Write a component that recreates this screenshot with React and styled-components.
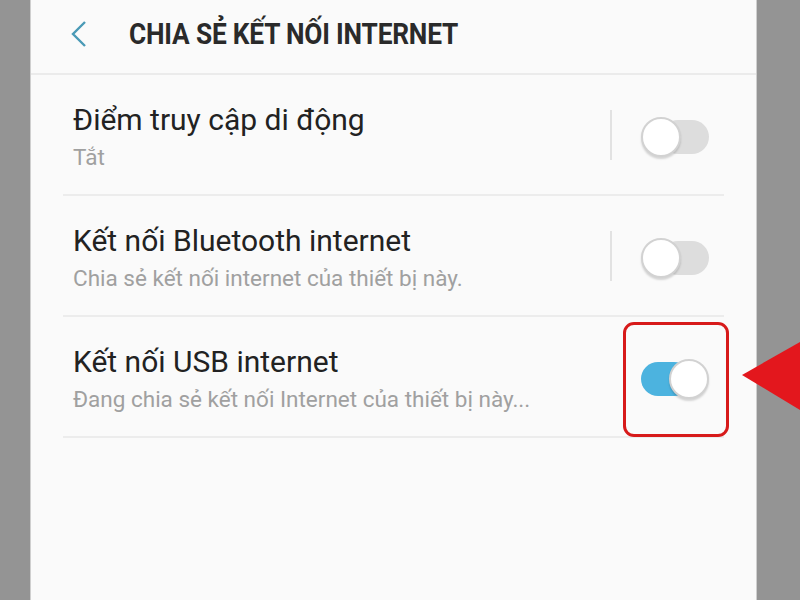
import React from "react";
import styled, { createGlobalStyle } from "styled-components";

const GlobalStyle = createGlobalStyle`
  html, body {
    margin: 0;
    padding: 0;
    background: #949494;
  }
  #root {
    height: 600px;
  }
`;

const Page = styled.div`
  display: flex;
  height: 600px;
  overflow: hidden;
  position: relative;
`;

const Side = styled.div`
  width: ${(p) => p.w}px;
  background: #949494;
  flex-shrink: 0;
`;

const Screen = styled.div`
  flex: 1;
  background: #fafafa;
  display: flex;
  flex-direction: column;
  font-family: Roboto, "Noto Sans", sans-serif;
  border-left: 1px solid #cfcfcf;
  border-right: 1px solid #cfcfcf;
`;

const Header = styled.div`
  height: 67px;
  padding-bottom: 6px;
  display: flex;
  align-items: center;
  padding-left: 38px;
  border-bottom: 2px solid #ebebeb;
`;

const Back = styled.svg`
  width: 20px;
  height: 28px;
  margin-right: 40px;
`;

const Title = styled.h1`
  margin: 0;
  font-size: 30px;
  font-weight: 700;
  color: #2a2a2a;
  letter-spacing: -0.2px;
  transform: scaleX(0.875);
  transform-origin: left center;
  white-space: nowrap;
`;

const List = styled.div`
  margin: 0 32px;
`;

const Row = styled.div`
  height: 119px;
  display: flex;
  align-items: center;
  padding-left: 10px;
  border-bottom: 2px solid #ececec;
`;

const Texts = styled.div`
  flex: 1;
  display: flex;
  flex-direction: column;
  gap: 7px;
  margin-top: 2px;
`;

const Label = styled.div`
  font-size: 30px;
  color: #222;
`;

const Summary = styled.div`
  font-size: 22.5px;
  color: #a0a0a0;
`;

const Divider = styled.div`
  width: 2px;
  height: 50px;
  background: #e2e2e2;
  margin-right: 29px;
  visibility: ${(p) => (p.hidden ? "hidden" : "visible")};
`;

const ToggleWrap = styled.div`
  position: relative;
  width: 68px;
  height: 40px;
  margin-right: 15px;
  margin-top: 4px;
  display: flex;
  align-items: center;
`;

const Track = styled.div`
  position: absolute;
  left: ${(p) => (p.on ? 0 : 20)}px;
  right: ${(p) => (p.on ? 18 : 0)}px;
  top: 3px;
  height: 34px;
  border-radius: 17px;
  background: ${(p) => (p.on ? "#4cb3df" : "#dddddd")};
`;

const Knob = styled.div`
  position: absolute;
  left: ${(p) => (p.on ? 28 : 0)}px;
  top: 0;
  width: 36px;
  height: 36px;
  border-radius: 50%;
  background: #fff;
  border: 2px solid #d2d2d2;
  box-shadow: 0 2px 2px rgba(0, 0, 0, 0.15);
`;

const Highlight = styled.div`
  position: absolute;
  left: -18px;
  right: -20px;
  top: -37px;
  bottom: -38px;
  border: 3px solid #d71a1a;
  border-radius: 11px;
`;

const Arrow = styled.svg`
  position: absolute;
  left: 740px;
  top: 338px;
  width: 60px;
  height: 76px;
`;

const Toggle = ({ on, marked }) => (
  <ToggleWrap>
    <Track on={on} />
    <Knob on={on} />
    {marked && <Highlight />}
  </ToggleWrap>
);

const rows = [
  { label: "Điểm truy cập di động", summary: "Tắt", on: false, sep: true },
  {
    label: "Kết nối Bluetooth internet",
    summary: "Chia sẻ kết nối internet của thiết bị này.",
    on: false,
    sep: true,
  },
  {
    label: "Kết nối USB internet",
    summary: "Đang chia sẻ kết nối Internet của thiết bị này...",
    on: true,
    sep: false,
    marked: true,
  },
];

const App = () => {
  return (
    <>
      <GlobalStyle />
      <Page>
        <Side w={30} />
        <Screen>
          <Header>
            <Back viewBox="0 0 20 28">
              <path
                d="M16 2 L4 14 L16 26"
                fill="none"
                stroke="#4a9ab6"
                strokeWidth="2.4"
              />
            </Back>
            <Title>CHIA SẺ KẾT NỐI INTERNET</Title>
          </Header>
          <List>
            {rows.map((r) => (
              <Row key={r.label}>
                <Texts>
                  <Label>{r.label}</Label>
                  <Summary>{r.summary}</Summary>
                </Texts>
                <Divider hidden={!r.sep} />
                <Toggle on={r.on} marked={r.marked} />
              </Row>
            ))}
          </List>
        </Screen>
        <Side w={43} />
        <Arrow viewBox="0 0 60 76">
          <path d="M2 37 L60 4 L60 72 Z" fill="#e3171d" />
        </Arrow>
      </Page>
    </>
  );
};

export default App;
